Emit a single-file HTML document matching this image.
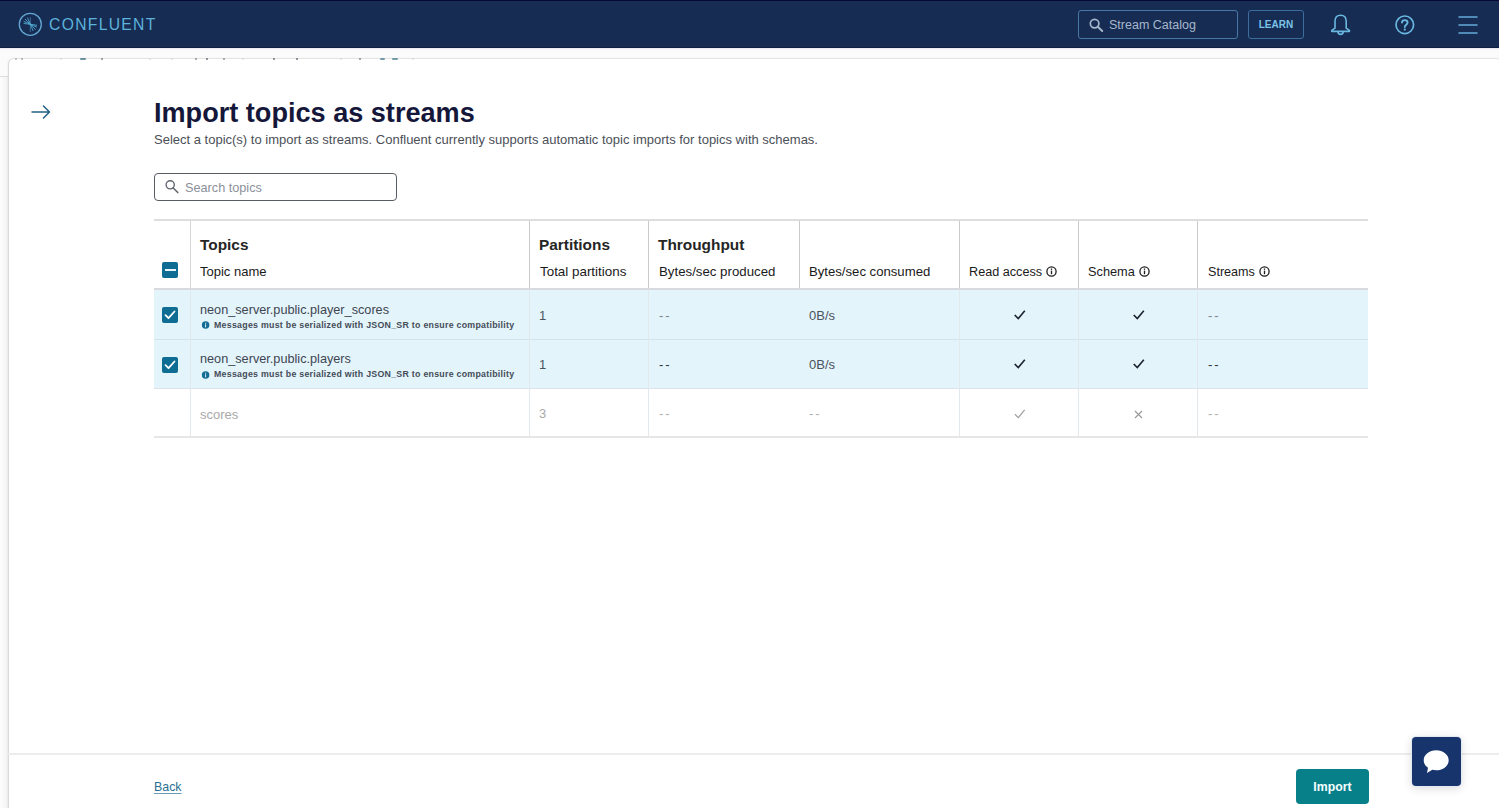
<!DOCTYPE html>
<html><head><meta charset="utf-8">
<style>
*{box-sizing:border-box;margin:0;padding:0}
html,body{width:1499px;height:808px;overflow:hidden;background:#fbfbfb;font-family:"Liberation Sans",sans-serif;position:relative}
.abs{position:absolute}
#nav{left:0;top:0;width:1499px;height:48px;background:#162c53;border-top:1px solid #060a32;border-bottom:1px solid #0f1f42}
#logo-text{left:49px;top:14px;font-size:15.7px;letter-spacing:1.3px;color:#5db3db;line-height:20px}
#scat{left:1078px;top:9px;width:160px;height:29px;border:1px solid #4877a6;border-radius:3px}
#scat span{position:absolute;left:30px;top:6px;font-size:12.5px;color:#a6b8cc;line-height:16px}
#learn{left:1248px;top:9px;width:56px;height:29px;border:1px solid #3c6e9c;border-radius:3px;color:#7cc3e6;font-weight:bold;font-size:10px;text-align:center;line-height:28px}
#bg-line{left:0;top:76px;width:9px;height:1px;background:#dedede}
#panel{left:8px;top:58px;width:1497px;height:760px;background:#fff;border-top:1px solid #e3e3e3;border-left:1px solid #dadada;border-top-left-radius:6px;border-top-right-radius:9px;box-shadow:-1px 0 2px rgba(0,0,0,0.04)}
#strip{left:0;top:77px;width:9px;height:760px;background:linear-gradient(to right,#fdfdfd,#f1f1f1)}
#navsh{left:0;top:48px;width:1499px;height:2px;background:linear-gradient(#e6e8ee,rgba(255,255,255,0))}
.bc{position:absolute;top:58px;height:1.5px;border-radius:1px;opacity:0.75}
#title{left:154px;top:96px;font-size:27.1px;font-weight:bold;color:#15173a;line-height:34px;white-space:nowrap}
#sub{left:154px;top:132px;font-size:13px;color:#4b4f58;line-height:16px;white-space:nowrap}
#search{left:154px;top:173px;width:243px;height:28px;border:1px solid #585c64;border-radius:4px}
#search span{position:absolute;left:30px;top:6px;font-size:12.7px;color:#8b909a;line-height:16px}
.hline{position:absolute;left:154px;width:1214px}
.vline{position:absolute;width:1px}
.htxt{position:absolute;margin-top:0.5px;font-size:15.4px;font-weight:bold;color:#252525;line-height:18px;white-space:nowrap}
.hsub{position:absolute;font-size:13px;color:#1a1a1a;line-height:16px;white-space:nowrap}
.cell{position:absolute;font-size:13px;color:#4a5360;line-height:16px;white-space:nowrap}
.msg{position:absolute;font-size:8.8px;font-weight:bold;letter-spacing:0.27px;color:#454c58;line-height:10px;white-space:nowrap}
.cb{position:absolute;left:162px;width:16px;height:16px;background:#0f6c93;border-radius:2px}
.row{position:absolute;left:154px;width:1214px;background:#e3f4fb}
#footline{left:8px;top:753px;width:1491px;height:2px;background:#ececec}
#back{left:154px;top:779px;font-size:12.4px;color:#2a7090;text-decoration:underline;text-decoration-color:#6a9db3;text-decoration-thickness:1px;text-underline-offset:1.5px;line-height:16px}
#import{left:1296px;top:769px;width:73px;height:35px;background:#08808a;border-radius:4px;color:#f4ffff;font-weight:bold;font-size:12.3px;text-align:center;line-height:35px;padding-top:1px}
#chat{left:1412px;top:737px;width:49px;height:49px;background:#17346d;border-radius:4px;box-shadow:0 0 0 1px #e3e8f1,0 2px 10px rgba(0,0,0,0.16)}
</style></head>
<body>
<div id="nav" class="abs">
  <svg class="abs" style="left:18px;top:11px" width="26" height="26" viewBox="0 0 26 26">
    <circle cx="12.3" cy="12.3" r="11" fill="none" stroke="#64a6d2" stroke-width="1.3"/>
    <g stroke="#5fc0e8" stroke-width="0.9" stroke-linecap="round" opacity="0.85">
      <line x1="12.3" y1="5.5" x2="12.3" y2="19.5" opacity="0.6"/>
      <line x1="12.3" y1="12.3" x2="6" y2="9.5"/>
      <line x1="12.3" y1="12.3" x2="7.2" y2="7.2"/>
      <line x1="12.3" y1="12.3" x2="9.6" y2="6"/>
      <line x1="12.3" y1="12.3" x2="6" y2="11.5"/>
      <line x1="12.3" y1="12.3" x2="18.6" y2="15"/>
      <line x1="12.3" y1="12.3" x2="17.4" y2="17.4"/>
      <line x1="12.3" y1="12.3" x2="15" y2="18.6"/>
      <line x1="12.3" y1="12.3" x2="18.6" y2="13.2"/>
    </g>
  </svg>
  <div id="logo-text" class="abs">CONFLUENT</div>
  <div id="scat" class="abs">
    <svg class="abs" style="left:10px;top:7px" width="15" height="14" viewBox="0 0 15 14">
      <circle cx="5.6" cy="5.6" r="4.3" fill="none" stroke="#a6b8cc" stroke-width="1.7"/>
      <line x1="8.8" y1="8.8" x2="13.2" y2="13" stroke="#a6b8cc" stroke-width="1.9" stroke-linecap="round"/>
    </svg>
    <span>Stream Catalog</span>
  </div>
  <div id="learn" class="abs">LEARN</div>
  <svg class="abs" style="left:1329px;top:11px" width="23" height="24" viewBox="0 0 23 24">
    <path d="M6 16.2 L6 9.2 C6 5.4 8.4 3.2 11.6 3.2 C14.8 3.2 17.2 5.4 17.2 9.2 L17.2 16.2 L20.4 18.3 L20.4 19.4 L2.8 19.4 L2.8 18.3 Z" fill="none" stroke="#6ab8e0" stroke-width="1.6" stroke-linejoin="round"/>
    <path d="M9 19.8 A2.6 2.6 0 0 0 14.2 19.8" fill="none" stroke="#6ab8e0" stroke-width="1.6"/>
  </svg>
  <svg class="abs" style="left:1393px;top:13px" width="23" height="23" viewBox="0 0 23 23">
    <circle cx="11.8" cy="10.8" r="8.8" fill="none" stroke="#6ab8e0" stroke-width="1.7"/>
    <path d="M9 8.6 C9 5.3 14.6 5.3 14.6 8.6 C14.6 10.6 11.8 10.9 11.8 13" fill="none" stroke="#6ab8e0" stroke-width="1.9" stroke-linecap="round"/>
    <circle cx="11.8" cy="15.6" r="1.1" fill="#6ab8e0"/>
  </svg>
  <svg class="abs" style="left:1457px;top:13px" width="22" height="22" viewBox="0 0 22 22">
    <g stroke="#64a9d9" stroke-width="1.5" stroke-linecap="round">
      <line x1="2" y1="3" x2="20" y2="3"/><line x1="2" y1="11" x2="20" y2="11"/><line x1="2" y1="19" x2="20" y2="19"/>
    </g>
  </svg>
</div>
<div id="strip" class="abs"></div>
<div id="bg-line" class="abs"></div>
<div id="panel" class="abs"></div>
<div class="bc" style="left:15px;width:2px;background:#9aa0a8"></div><div class="bc" style="left:21px;width:2px;background:#8b9199"></div><div class="bc" style="left:60px;width:2px;background:#d0d4d8"></div><div class="bc" style="left:80px;width:6px;background:#3d6f85"></div><div class="bc" style="left:101px;width:2px;background:#5b6670"></div><div class="bc" style="left:149px;width:2px;background:#d0d4d8"></div><div class="bc" style="left:171px;width:2px;background:#d0d4d8"></div><div class="bc" style="left:195px;width:2px;background:#6b737b"></div><div class="bc" style="left:206px;width:2px;background:#3f4a55"></div><div class="bc" style="left:223px;width:2px;background:#6b737b"></div><div class="bc" style="left:242px;width:2px;background:#d0d4d8"></div><div class="bc" style="left:273px;width:2px;background:#3f4a55"></div><div class="bc" style="left:296px;width:2px;background:#3f4a55"></div><div class="bc" style="left:340px;width:2px;background:#d0d4d8"></div><div class="bc" style="left:359px;width:2px;background:#5b6670"></div><div class="bc" style="left:380px;width:5px;background:#4a7d92"></div><div class="bc" style="left:392px;width:6px;background:#4a7d92"></div><div class="bc" style="left:412px;width:2px;background:#d0d4d8"></div>

<div id="navsh" class="abs"></div>

<svg class="abs" style="left:30px;top:104px" width="22" height="16" viewBox="0 0 22 16">
  <path d="M2 8 L19.5 8 M13.5 2 L19.5 8 L13.5 14" fill="none" stroke="#235f82" stroke-width="1.5" stroke-linecap="round" stroke-linejoin="round"/>
</svg>
<div id="title" class="abs">Import topics as streams</div>
<div id="sub" class="abs">Select a topic(s) to import as streams. Confluent currently supports automatic topic imports for topics with schemas.</div>
<div id="search" class="abs">
  <svg class="abs" style="left:10px;top:6px" width="15" height="15" viewBox="0 0 15 15">
    <circle cx="5.2" cy="4.8" r="4.1" fill="none" stroke="#5e636d" stroke-width="1.35"/>
    <line x1="8.2" y1="7.9" x2="12.8" y2="12.6" stroke="#5e636d" stroke-width="1.5" stroke-linecap="round"/>
  </svg>
  <span>Search topics</span>
</div>

<!-- table -->
<div class="row" style="top:290px;height:50px"></div>
<div class="row" style="top:340px;height:49px"></div>
<div class="hline" style="top:219px;height:2px;background:#dedede"></div>
<div class="hline" style="top:288px;height:2px;background:#d9dae0"></div>
<div class="hline" style="top:339px;height:1px;background:#d3e3ec"></div>
<div class="hline" style="top:388px;height:1px;background:#dbe3e8"></div>
<div class="hline" style="top:436px;height:2px;background:#e6e6e6"></div>
<!-- header vlines -->
<div class="vline" style="left:190px;top:221px;height:67px;background:#d6d6da"></div>
<div class="vline" style="left:529px;top:221px;height:67px;background:#c9c9ce"></div>
<div class="vline" style="left:648px;top:221px;height:67px;background:#c9c9ce"></div>
<div class="vline" style="left:799px;top:221px;height:67px;background:#c9c9ce"></div>
<div class="vline" style="left:959px;top:221px;height:67px;background:#c9c9ce"></div>
<div class="vline" style="left:1078px;top:221px;height:67px;background:#c9c9ce"></div>
<div class="vline" style="left:1197px;top:221px;height:67px;background:#c9c9ce"></div>
<!-- body vlines -->
<div class="vline" style="left:190px;top:290px;height:146px;background:#e3e8ec"></div>
<div class="vline" style="left:529px;top:290px;height:146px;background:#e3e8ec"></div>
<div class="vline" style="left:648px;top:290px;height:146px;background:#e3e8ec"></div>
<div class="vline" style="left:959px;top:290px;height:146px;background:#e3e8ec"></div>
<div class="vline" style="left:1078px;top:290px;height:146px;background:#e3e8ec"></div>
<div class="vline" style="left:1197px;top:290px;height:146px;background:#e3e8ec"></div>

<div class="cb" style="top:262px"><div style="position:absolute;left:2.5px;top:6.8px;width:11px;height:2.2px;background:#e9f5fa"></div></div>
<div class="htxt" style="left:200px;top:235px">Topics</div>
<div class="hsub" style="left:200px;top:264px">Topic name</div>
<div class="htxt" style="left:539px;top:235px">Partitions</div>
<div class="hsub" style="left:540px;top:264px;font-size:13.4px">Total partitions</div>
<div class="htxt" style="left:658px;top:235px">Throughput</div>
<div class="hsub" style="left:659px;top:264px;font-size:13.25px">Bytes/sec produced</div>
<div class="hsub" style="left:809px;top:264px;font-size:13.15px">Bytes/sec consumed</div>
<div class="hsub" style="left:969px;top:264px;font-size:12.65px">Read access</div>
<div class="hsub" style="left:1088px;top:264px;font-size:12.75px">Schema</div>
<div class="hsub" style="left:1208px;top:264px;font-size:12.6px">Streams</div>
<svg class="abs" style="left:1046px;top:266px" width="11" height="11" viewBox="0 0 11 11"><circle cx="5.5" cy="5.5" r="4.6" fill="none" stroke="#1e1e1e" stroke-width="1.3"/><rect x="4.85" y="4.6" width="1.3" height="3.6" fill="#1e1e1e"/><rect x="4.85" y="2.5" width="1.3" height="1.3" fill="#1e1e1e"/></svg>
<svg class="abs" style="left:1139px;top:266px" width="11" height="11" viewBox="0 0 11 11"><circle cx="5.5" cy="5.5" r="4.6" fill="none" stroke="#1e1e1e" stroke-width="1.3"/><rect x="4.85" y="4.6" width="1.3" height="3.6" fill="#1e1e1e"/><rect x="4.85" y="2.5" width="1.3" height="1.3" fill="#1e1e1e"/></svg>
<svg class="abs" style="left:1259px;top:266px" width="11" height="11" viewBox="0 0 11 11"><circle cx="5.5" cy="5.5" r="4.6" fill="none" stroke="#1e1e1e" stroke-width="1.3"/><rect x="4.85" y="4.6" width="1.3" height="3.6" fill="#1e1e1e"/><rect x="4.85" y="2.5" width="1.3" height="1.3" fill="#1e1e1e"/></svg>

<!-- row 1 -->
<div class="cb" style="top:307px"><svg style="position:absolute;left:0;top:0" width="16" height="16" viewBox="0 0 16 16"><path d="M3.5 8.2 L6.5 11.2 L12.5 4.5" fill="none" stroke="#fff" stroke-width="1.8" stroke-linecap="round" stroke-linejoin="round"/></svg></div>
<div class="cell" style="left:200px;top:302px;font-size:12.7px;color:#3f4652">neon_server.public.player_scores</div>
<div class="msg" style="left:214px;top:320px">Messages must be serialized with JSON_SR to ensure compatibility</div>
<div class="cell" style="left:539px;top:308px">1</div>
<div class="cell" style="left:659px;top:308px;letter-spacing:2px;color:#7d8590">--</div>
<div class="cell" style="left:809px;top:308px">0B/s</div>
<div class="cell" style="left:1208px;top:308px;letter-spacing:2px;color:#7d8590">--</div>

<svg class="abs" style="left:201px;top:321px" width="9" height="9" viewBox="0 0 9 9"><circle cx="4.6" cy="4" r="3.75" fill="#136c93"/><rect x="4.1" y="3.3" width="1" height="3" fill="#e8f6fc"/><rect x="4.1" y="1.7" width="1" height="1" fill="#e8f6fc"/></svg>
<!-- row 2 -->
<div class="cb" style="top:357px"><svg style="position:absolute;left:0;top:0" width="16" height="16" viewBox="0 0 16 16"><path d="M3.5 8.2 L6.5 11.2 L12.5 4.5" fill="none" stroke="#fff" stroke-width="1.8" stroke-linecap="round" stroke-linejoin="round"/></svg></div>
<div class="cell" style="left:200px;top:351px;font-size:12.7px;color:#3f4652">neon_server.public.players</div>
<div class="msg" style="left:214px;top:369px">Messages must be serialized with JSON_SR to ensure compatibility</div>
<div class="cell" style="left:539px;top:357px">1</div>
<div class="cell" style="left:659px;top:357px;letter-spacing:2px;color:#30353d">--</div>
<div class="cell" style="left:809px;top:357px">0B/s</div>
<div class="cell" style="left:1208px;top:357px;letter-spacing:2px;color:#30353d">--</div>

<svg class="abs" style="left:201px;top:371px" width="9" height="9" viewBox="0 0 9 9"><circle cx="4.6" cy="4" r="3.75" fill="#136c93"/><rect x="4.1" y="3.3" width="1" height="3" fill="#e8f6fc"/><rect x="4.1" y="1.7" width="1" height="1" fill="#e8f6fc"/></svg>
<!-- row 3 -->
<div class="cell" style="left:200px;top:407px;color:#a9a9a9">scores</div>
<div class="cell" style="left:539px;top:406px;color:#a9a9a9">3</div>
<div class="cell" style="left:659px;top:406px;color:#b0b0b0;letter-spacing:2px">--</div>
<div class="cell" style="left:809px;top:406px;color:#b0b0b0;letter-spacing:2px">--</div>
<div class="cell" style="left:1208px;top:406px;color:#b0b0b0;letter-spacing:2px">--</div>

<svg class="abs" style="left:1014px;top:310px" width="12" height="11" viewBox="0 0 12 11"><path d="M1.3 5.6 L4.3 8.6 L10.3 1.4" fill="none" stroke="#1c2130" stroke-width="1.6" stroke-linecap="square"/></svg>
<svg class="abs" style="left:1133px;top:310px" width="12" height="11" viewBox="0 0 12 11"><path d="M1.3 5.6 L4.3 8.6 L10.3 1.4" fill="none" stroke="#1c2130" stroke-width="1.6" stroke-linecap="square"/></svg>
<svg class="abs" style="left:1014px;top:359px" width="12" height="11" viewBox="0 0 12 11"><path d="M1.3 5.6 L4.3 8.6 L10.3 1.4" fill="none" stroke="#1c2130" stroke-width="1.6" stroke-linecap="square"/></svg>
<svg class="abs" style="left:1133px;top:359px" width="12" height="11" viewBox="0 0 12 11"><path d="M1.3 5.6 L4.3 8.6 L10.3 1.4" fill="none" stroke="#1c2130" stroke-width="1.6" stroke-linecap="square"/></svg>
<svg class="abs" style="left:1014px;top:409px" width="12" height="11" viewBox="0 0 12 11"><path d="M1.3 5.6 L4.3 8.6 L10.3 1.4" fill="none" stroke="#9c9c9c" stroke-width="1.2" stroke-linecap="square"/></svg>
<svg class="abs" style="left:1134px;top:410px" width="9" height="9" viewBox="0 0 9 9"><path d="M1 1 L8 8 M8 1 L1 8" fill="none" stroke="#9a9a9a" stroke-width="1.2"/></svg>
<div id="footline" class="abs"></div>
<div id="back" class="abs">Back</div>
<div id="import" class="abs">Import</div>
<div id="chat" class="abs">
  <svg class="abs" style="left:11px;top:13px" width="27" height="25" viewBox="0 0 27 25">
    <path d="M13.2 0.3 C20.1 0.3 25.7 4.8 25.7 10.3 C25.7 15.8 20.1 20.3 13.2 20.3 C11.8 20.3 10.5 20.1 9.3 19.8 L4 23.1 L5 17.7 C2.3 15.9 0.7 13.2 0.7 10.3 C0.7 4.8 6.3 0.3 13.2 0.3 Z" fill="#fff"/>
  </svg>
</div>
</body></html>
